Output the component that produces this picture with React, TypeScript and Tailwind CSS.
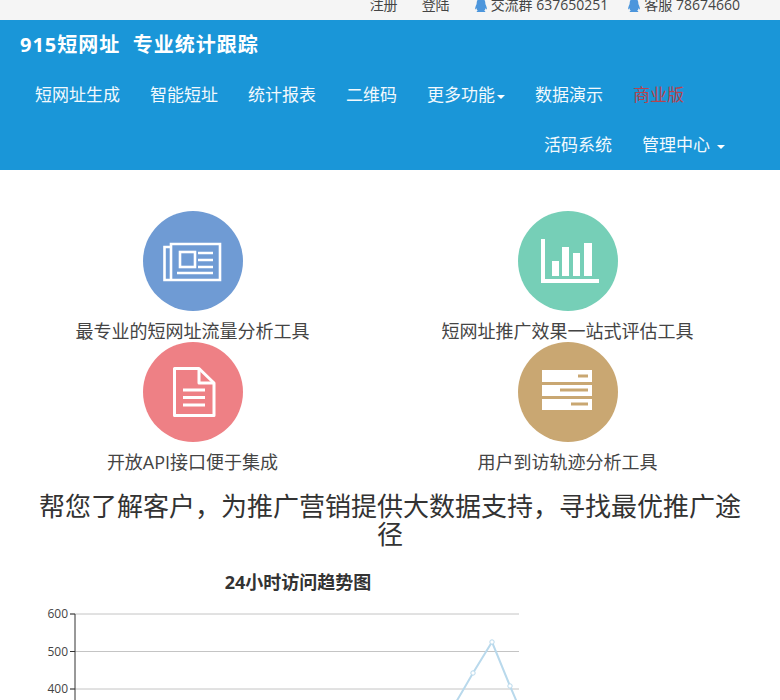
import { FaQq } from 'react-icons/fa';

const font = { fontFamily: '"Open Sans", "Noto Sans CJK SC", sans-serif' };

const navRow = [
  { label: '短网址生成' },
  { label: '智能短址' },
  { label: '统计报表' },
  { label: '二维码' },
  { label: '更多功能', caret: true },
  { label: '数据演示' },
  { label: '商业版', red: true },
];

function Caret() {
  return <span className="ml-[2px] inline-block h-0 w-0 border-x-4 border-t-4 border-x-transparent border-t-white align-middle" />;
}

function NewsIcon() {
  return (
    <svg viewBox="0 0 100 100" className="h-[100px] w-[100px]" fill="none" stroke="#fff" strokeWidth="2.6">
      <path d="M28 36H21.5V69H77V33H28V69" />
      <rect x="37" y="41" width="15" height="15" />
      <path d="M55 42H70M55 49H70M55 56H70M34 62H70" />
    </svg>
  );
}

function ChartIcon() {
  return (
    <svg viewBox="0 0 100 100" className="h-[100px] w-[100px]" fill="#fff">
      <path d="M23 28H27V68H81V72H23Z" />
      <rect x="34" y="50" width="7" height="15" />
      <rect x="44" y="36" width="7" height="29" />
      <rect x="55" y="42" width="7" height="23" />
      <rect x="66" y="32" width="8" height="33" />
    </svg>
  );
}

function DocIcon() {
  return (
    <svg viewBox="0 0 100 100" className="h-[100px] w-[100px]" fill="none" stroke="#fff" strokeWidth="3">
      <path d="M31.5 26.5H56L71 41V73.5H31.5Z" strokeLinejoin="round" />
      <path d="M56 26.5V41H71" strokeLinejoin="round" />
      <path d="M40 48H62M40 55.5H62M40 63H62" />
    </svg>
  );
}

function ServerIcon() {
  return (
    <svg viewBox="0 0 100 100" className="h-[100px] w-[100px]">
      <rect x="24" y="28" width="50" height="12" fill="#fff" />
      <rect x="24" y="43" width="50" height="11" fill="#fff" />
      <rect x="24" y="57" width="50" height="11" fill="#fff" />
      <path d="M60 34H70M42 48H70M53 62H70" stroke="#c9a772" strokeWidth="3" />
    </svg>
  );
}

function Feature({ bg, icon, text }: { bg: string; icon: React.ReactNode; text: string }) {
  return (
    <div className="flex h-[131px] flex-col items-center">
      <div className={`h-[100px] w-[100px] rounded-full ${bg}`}>{icon}</div>
      <p className="mt-[5px] text-[18px] leading-[30px] text-[#444]">{text}</p>
    </div>
  );
}

const points = [
  [436, 741], [462, 697], [473, 678], [492, 647], [510, 691], [519, 712],
];

function TrendChart() {
  return (
    <svg width="596" height="130" className="block" style={font}>
      {[619, 656.5, 694].map((y, i) => (
        <g key={y}>
          <line x1="70" x2="519" y1={y - 600} y2={y - 600} stroke="#c4c4c4" />
          <line x1="70" x2="75" y1={y - 600} y2={y - 600} stroke="#333" />
          <text x="68" y={y - 596} textAnchor="end" fontSize="12" fill="#444">
            {600 - i * 100}
          </text>
        </g>
      ))}
      <line x1="75" x2="75" y1="19" y2="130" stroke="#333" />
      <polyline
        points={points.map(([x, y]) => `${x},${y - 600}`).join(' ')}
        fill="none"
        stroke="#b9d9ec"
        strokeWidth="2"
      />
      {points.slice(2, 5).map(([x, y]) => (
        <circle key={x} cx={x} cy={y - 600} r="2.2" fill="#fff" stroke="#b9d9ec" />
      ))}
    </svg>
  );
}

export default function App() {
  return (
    <div className="h-[700px] w-[780px] overflow-hidden bg-white text-[#333]" style={font}>
      {/* top bar, text is cut off by the page edge */}
      <div className="flex h-5 items-end justify-end overflow-hidden bg-[#f5f5f5] pr-10 text-[14px] leading-[20px] text-[#444]">
        <div className="flex items-center pb-[5px]">
          <span>注册</span>
          <span className="ml-6">登陆</span>
          <FaQq className="ml-6 mr-[3px] h-[14px] w-[14px] text-[#4c96dc]" />
          <span>交流群 637650251</span>
          <FaQq className="ml-[19px] mr-[3px] h-[14px] w-[14px] text-[#4c96dc]" />
          <span>客服 78674660</span>
        </div>
      </div>

      <header className="h-[150px] bg-[#1a96d8] text-white">
        <div className="flex h-[50px] items-center whitespace-pre pl-5 text-[20px] font-bold tracking-[1px]">
          915短网址  专业统计跟踪
        </div>
        <nav className="flex h-[50px] items-center gap-[30px] pl-[35px] text-[17px]">
          {navRow.map((item) => (
            <a key={item.label} className={item.red ? 'text-[#b5444f]' : 'text-[#f2f9fd]'}>
              {item.label}
              {item.caret && <Caret />}
            </a>
          ))}
        </nav>
        <nav className="flex h-[50px] items-center justify-end gap-[30px] pr-[55px] text-[17px] text-[#f2f9fd]">
          <a>活码系统</a>
          <a>
            管理中心
            <span className="ml-[7px] inline-block h-0 w-0 border-x-4 border-t-4 border-x-transparent border-t-white align-middle" />
          </a>
        </nav>
      </header>

      <section className="grid grid-cols-2 pl-[5px] pr-[25px] pt-[41px]">
        <Feature bg="bg-[#6f9bd4]" icon={<NewsIcon />} text="最专业的短网址流量分析工具" />
        <Feature bg="bg-[#76cfb7]" icon={<ChartIcon />} text="短网址推广效果一站式评估工具" />
        <Feature bg="bg-[#ee8085]" icon={<DocIcon />} text="开放API接口便于集成" />
        <Feature bg="bg-[#c9a772]" icon={<ServerIcon />} text="用户到访轨迹分析工具" />
      </section>

      <h2 className="mx-auto mt-[19px] w-[720px] text-center text-[26px] leading-[28px] text-[#333]">
        帮您了解客户，为推广营销提供大数据支持，寻找最优推广途径
      </h2>

      <h3 className="mt-[21px] w-[596px] text-center text-[18px] font-bold leading-[26px] text-[#333]">
        24小时访问趋势图
      </h3>
      <TrendChart />
    </div>
  );
}
